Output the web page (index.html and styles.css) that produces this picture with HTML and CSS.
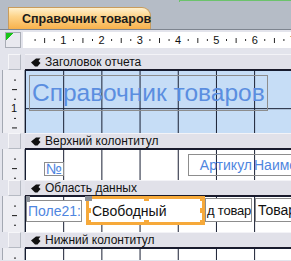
FILE: index.html
```html
<!DOCTYPE html>
<html lang="ru">
<head>
<meta charset="utf-8">
<link rel="stylesheet" href="styles.css">
</head>
<body>
<div class="tabbar">
  <div class="tab">
    <svg class="tabicon" width="12" height="12" viewBox="0 0 12 12">
      <rect x="0.5" y="0.5" width="11" height="11" fill="#3f8f3a" stroke="#1f5a1c"/>
      <rect x="2" y="2" width="8" height="8" fill="#6fbf5a"/>
      <rect x="3" y="3" width="3" height="1" fill="#d8f0c8"/>
      <rect x="3" y="5" width="5" height="1" fill="#d8f0c8"/>
      <rect x="3" y="7" width="4" height="1" fill="#d8f0c8"/>
    </svg>
    <span>Справочник товаров</span>
  </div>
  <div class="tabfill"></div>
</div>
<div class="rulerrow">
  <div class="corner"></div>
  <div class="hruler">
    <div class="n"><span>1</span></div>
    <div class="n"><span>2</span></div>
    <div class="n"><span>3</span></div>
    <div class="n"><span>4</span></div>
    <div class="n"><span>5</span></div>
    <div class="n"><span>6</span></div>
    <div class="n"><span>7</span></div>
  </div>
</div>
<div class="design">
  <div class="row">
    <div class="side"><div class="sel"></div></div>
    <div class="bar"><svg class="bicon" width="10" height="9" viewBox="0 0 10 9"><path d="M0 4.5 L5 0.5 L9.5 0.5 L7.5 3 L9.5 5 L6.5 8.5 L4 8.5 Z" fill="#111"/></svg>Заголовок отчета</div>
  </div>
  <div class="row rh">
    <div class="side vr"><span class="vn">1</span></div>
    <div class="area blue">
      <div class="title">Справочник товаров</div>
    </div>
  </div>
  <div class="row">
    <div class="side"><div class="sel"></div></div>
    <div class="bar"><svg class="bicon" width="10" height="9" viewBox="0 0 10 9"><path d="M0 4.5 L5 0.5 L9.5 0.5 L7.5 3 L9.5 5 L6.5 8.5 L4 8.5 Z" fill="#111"/></svg>Верхний колонтитул</div>
  </div>
  <div class="row ph">
    <div class="side vr"></div>
    <div class="area phs">
      <div class="lbl num">№</div>
      <div class="lbl art">Артикул</div>
      <div class="lbl name">Наименование</div>
    </div>
  </div>
  <div class="row">
    <div class="side"><div class="sel"></div></div>
    <div class="bar"><svg class="bicon" width="10" height="9" viewBox="0 0 10 9"><path d="M0 4.5 L5 0.5 L9.5 0.5 L7.5 3 L9.5 5 L6.5 8.5 L4 8.5 Z" fill="#111"/></svg>Область данных</div>
  </div>
  <div class="row dt">
    <div class="side vr"></div>
    <div class="area dts">
      <div class="ctl pole"><i class="mv small"></i>Поле21:</div>
      <div class="sel-box">
        <div class="ctl free">Свободный</div>
        <i class="mv big"></i>
        <i class="h tm"></i><i class="h tr"></i>
        <i class="h ml"></i><i class="h mr"></i>
        <i class="h bl"></i><i class="h bm"></i><i class="h br"></i>
      </div>
      <div class="ctl code">д товар</div>
      <div class="ctl tovar">Товар</div>
    </div>
  </div>
  <div class="row">
    <div class="side"><div class="sel"></div></div>
    <div class="bar"><svg class="bicon" width="10" height="9" viewBox="0 0 10 9"><path d="M0 4.5 L5 0.5 L9.5 0.5 L7.5 3 L9.5 5 L6.5 8.5 L4 8.5 Z" fill="#111"/></svg>Нижний колонтитул</div>
  </div>
  <div class="row ft">
    <div class="side vr"></div>
    <div class="area"></div>
  </div>
</div>
</body>
</html>
```
FILE: styles.css
```css
* { box-sizing: border-box; }
html, body { margin: 0; padding: 0; }
body {
  width: 291px;
  height: 261px;
  overflow: hidden;
  background: #e3e4ec;
  font-family: "Liberation Sans", Arial, sans-serif;
}

/* tab strip */
.tabbar {
  height: 29px;
  background: #b5bcc6;
  display: flex;
  align-items: flex-end;
  padding-left: 8px;
}
.tab {
  width: 143px;
  height: 22px;
  display: flex;
  align-items: center;
  gap: 10px;
  padding-left: 3px;
  background: linear-gradient(#fff0cc, #fdd48a 40%, #f7b14c);
  border: 1px solid #c99c5c;
  border-bottom: none;
  border-radius: 0 9px 0 0;
  font-size: 12.5px;
  font-weight: bold;
  color: #1b1b1b;
  white-space: nowrap;
}
.tabfill {
  flex: 1;
  align-self: flex-start;
  height: 2px;
  margin-left: 28px;
  border-top: 1px solid #6cc36c;
  border-left: 1px solid #6cc36c;
}

/* horizontal ruler */
.rulerrow {
  height: 20px;
  display: flex;
  gap: 2px;
  padding: 2px 0 1px 5px;
  background: #e3e4ec;
  border-top: 1px solid #7e858f;
}
.corner {
  width: 16px;
  flex: none;
  border: 1px solid #a9adb6;
  background: linear-gradient(135deg, #19c419 0 5px, transparent 5px) no-repeat, #e9e9ef;
}
.hruler {
  flex: 1;
  display: flex;
  align-items: center;
  padding-left: 2px;
  overflow: hidden;
  font-size: 11px;
  color: #111;
  background-color: #fff;
  background-image:
    linear-gradient(90deg, #222 1px, transparent 1px),
    linear-gradient(90deg, #222 1px, transparent 1px);
  background-size: 19.15px 2px, 38.3px 5px;
  background-position: 11.6px center, 21.15px center;
  background-repeat: repeat-x;
}
.n {
  flex: none;
  width: 38.3px;
  display: flex;
  justify-content: flex-end;
}
.n span { margin-right: -3px; }

/* design surface */
.design { padding-top: 5px; }
.row { display: flex; }
.side {
  width: 25px;
  flex: none;
}
.sel {
  margin-left: 8px;
  width: 13px;
  height: 16px;
  background: #e2e2e9;
  border: 1px solid #b6bac3;
  border-top-color: #f6f6f9;
  border-left-color: #f6f6f9;
}
.vr {
  margin-left: 2px;
  width: 23px;
  border-left: 1px solid #a3a8b2;
  border-right: 1px solid #9aa0aa;
  background-color: #eeeef3;
  background-image:
    linear-gradient(#111 1px, transparent 1px),
    linear-gradient(#111 1px, transparent 1px);
  background-size: 2px 19.15px, 5px 38.3px;
  background-position: 11px 9.6px, 9px 19.15px;
  background-repeat: repeat-y;
  font-size: 11px;
  color: #111;
  padding-left: 8px;
  overflow: hidden;
}
.vn {
  display: block;
  margin-top: 32px;
  background: #eeeef3;
  width: 7px;
}

.bar {
  flex: 1;
  height: 16px;
  display: flex;
  align-items: center;
  gap: 4px;
  padding-left: 6px;
  background: #e1e1e9;
  border-top: 1px solid #f3f3f7;
  border-bottom: 1px solid #1a1a2a;
  font-size: 12px;
  color: #111;
  white-space: nowrap;
}
.bicon { flex: none; }

.area {
  flex: 1;
  min-width: 0;
  background-color: #fff;
  background-image:
    linear-gradient(90deg, #141a2e 1px, transparent 1px),
    linear-gradient(#141a2e 1px, transparent 1px);
  background-size: 38.2px 38.2px;
  background-position: 0 0;
  display: flex;
  align-items: flex-start;
  overflow: hidden;
}
.area > * { flex: none; }
.area.blue { background-color: #c6ddf6; }

.rh { height: 63px; }
.ph { height: 31px; }
.dt { height: 36px; }
.ft { height: 12px; }

.title {
  margin: 5px 0 0 4px;
  width: 239px;
  height: 36px;
  border: 1px solid #8d8d8d;
  padding-left: 2px;
  font-size: 24.5px;
  line-height: 34px;
  color: #5b8ee0;
  white-space: nowrap;
}

.lbl {
  border: 1px solid #8d8d8d;
  font-size: 14px;
  color: #4f86e0;
  white-space: nowrap;
  display: flex;
  align-items: center;
}
.num {
  margin: 13px 0 0 19px;
  width: 20px;
  height: 14px;
  justify-content: center;
  font-size: 15px;
  line-height: 12px;
}
.art {
  margin: 5px 0 0 124px;
  width: 65px;
  height: 22px;
  justify-content: flex-end;
  padding-right: 1px;
  border-right: none;
}
.name {
  margin-top: 5px;
  height: 22px;
  border-left: none;
  padding-left: 1px;
  width: 60px;
}

.ctl {
  background: #fff;
  border: 1px solid #8d8d8d;
  font-size: 14px;
  color: #111;
  white-space: nowrap;
  display: flex;
  align-items: center;
  overflow: hidden;
}
.pole {
  position: relative;
  overflow: visible;
  margin: 4px 0 0 1px;
  width: 56px;
  height: 22px;
  color: #4f86e0;
  padding-left: 1px;
}
.sel-box {
  position: relative;
  margin: 0 0 0 4px;
  width: 119px;
  height: 29px;
  border: 3px solid #f6a93a;
}
.free {
  width: 100%;
  height: 100%;
  border: none;
  padding-left: 3px;
}
.code {
  margin: 2px 0 0 0;
  width: 47px;
  height: 24px;
  padding-left: 1px;
  font-size: 13px;
  letter-spacing: -0.2px;
}
.tovar {
  margin: 2px 0 0 3px;
  width: 40px;
  height: 24px;
  padding-left: 2px;
}

/* selection handles */
.mv { position: absolute; background: #8b9098; }
.mv.small { left: -1px; top: -5px; width: 4px; height: 6px; }
.mv.big { left: -4px; top: -4px; width: 7px; height: 6px; }
.h { position: absolute; width: 5px; height: 5px; background: #f6a93a; }
.tm { left: 55px; top: -3px; }
.tr { right: -3px; top: -3px; }
.ml { left: -3px; top: 9px; }
.mr { right: -3px; top: 9px; }
.bl { left: -3px; bottom: -3px; }
.bm { left: 55px; bottom: -3px; }
.br { right: -3px; bottom: -3px; }
```
